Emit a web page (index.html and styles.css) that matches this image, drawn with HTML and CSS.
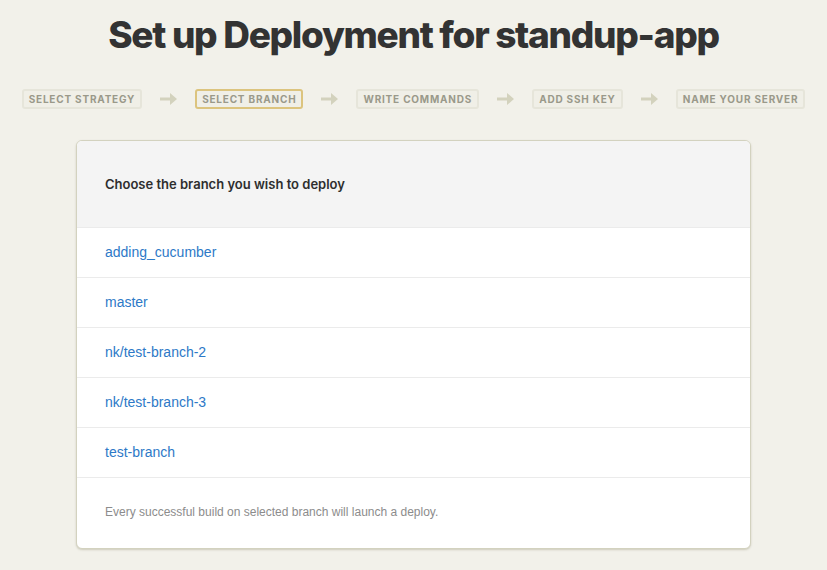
FILE: index.html
```html
<!DOCTYPE html>
<html>
<head>
<meta charset="utf-8">
<link rel="stylesheet" href="styles.css">
</head>
<body>
<h1 class="title">Set up Deployment for standup-app</h1>
<ol class="steps">
  <li class="step">Select Strategy</li>
  <li class="arrow"><svg width="17" height="12" viewBox="0 0 17 12"><path d="M0 4.5h10V0l7 6-7 6V7.5H0z" fill="#d3d2bd"/></svg></li>
  <li class="step active">Select Branch</li>
  <li class="arrow"><svg width="17" height="12" viewBox="0 0 17 12"><path d="M0 4.5h10V0l7 6-7 6V7.5H0z" fill="#d3d2bd"/></svg></li>
  <li class="step">Write Commands</li>
  <li class="arrow"><svg width="17" height="12" viewBox="0 0 17 12"><path d="M0 4.5h10V0l7 6-7 6V7.5H0z" fill="#d3d2bd"/></svg></li>
  <li class="step">Add SSH Key</li>
  <li class="arrow"><svg width="17" height="12" viewBox="0 0 17 12"><path d="M0 4.5h10V0l7 6-7 6V7.5H0z" fill="#d3d2bd"/></svg></li>
  <li class="step">Name Your Server</li>
</ol>
<section class="card">
  <header class="card-head">Choose the branch you wish to deploy</header>
  <ul class="branches">
    <li class="branch"><a href="#">adding_cucumber</a></li>
    <li class="branch"><a href="#">master</a></li>
    <li class="branch"><a href="#">nk/test-branch-2</a></li>
    <li class="branch"><a href="#">nk/test-branch-3</a></li>
    <li class="branch"><a href="#">test-branch</a></li>
  </ul>
  <footer class="card-foot">Every successful build on selected branch will launch a deploy.</footer>
</section>
</body>
</html>
```
FILE: styles.css
```css
html, body { margin: 0; padding: 0; }
body {
  background: #f2f1ea;
  font-family: "Liberation Sans", Arial, sans-serif;
  width: 827px;
  height: 570px;
  overflow: hidden;
}
.title {
  margin: 0;
  padding-top: 13px;
  height: 49px;
  text-align: center;
  font-family: Inter, "Open Sans", sans-serif;
  font-weight: 800;
  font-size: 37px;
  line-height: 44px;
  letter-spacing: -1.3px;
  color: #333333;
}
.steps {
  list-style: none;
  margin: 27px 0 0 0;
  padding: 0;
  display: flex;
  justify-content: center;
  align-items: center;
  gap: 18px;
}
.step {
  box-sizing: border-box;
  height: 20px;
  padding: 0 5px;
  border: 2px solid #e6e5da;
  border-radius: 3px;
  background: #f0efe7;
  font-family: Inter, "Open Sans", sans-serif;
  font-weight: 700;
  font-size: 10px;
  line-height: 16px;
  letter-spacing: 0.8px;
  text-transform: uppercase;
  color: #9a998a;
  white-space: nowrap;
}
.step.active { border-color: #dcc47e; }
.arrow { display: flex; align-items: center; height: 20px; }
.card {
  box-sizing: border-box;
  width: 675px;
  margin: 31px auto 0;
  background: #ffffff;
  border: 1px solid #d3d2bf;
  border-radius: 6px;
  box-shadow: 0 1px 2px rgba(160,158,130,0.45);
  overflow: hidden;
}
.card-head {
  height: 86px;
  box-sizing: border-box;
  padding: 0 28px 1px;
  display: flex;
  align-items: center;
  background: #f4f4f4;
  font-family: Inter, "Open Sans", sans-serif;
  font-weight: 600;
  font-size: 13px;
  color: #2e2e2e;
}
.branches { list-style: none; margin: 0; padding: 0; }
.branch {
  height: 50px;
  box-sizing: border-box;
  border-top: 1px solid #ebebeb;
  padding: 0 28px 2px;
  display: flex;
  align-items: center;
  font-size: 14px;
}
.branch a { color: #2d79c7; text-decoration: none; }
.card-foot {
  height: 71px;
  box-sizing: border-box;
  border-top: 1px solid #ebebeb;
  padding: 0 28px 3px;
  display: flex;
  align-items: center;
  font-size: 12px;
  color: #8c8c8c;
}
```
